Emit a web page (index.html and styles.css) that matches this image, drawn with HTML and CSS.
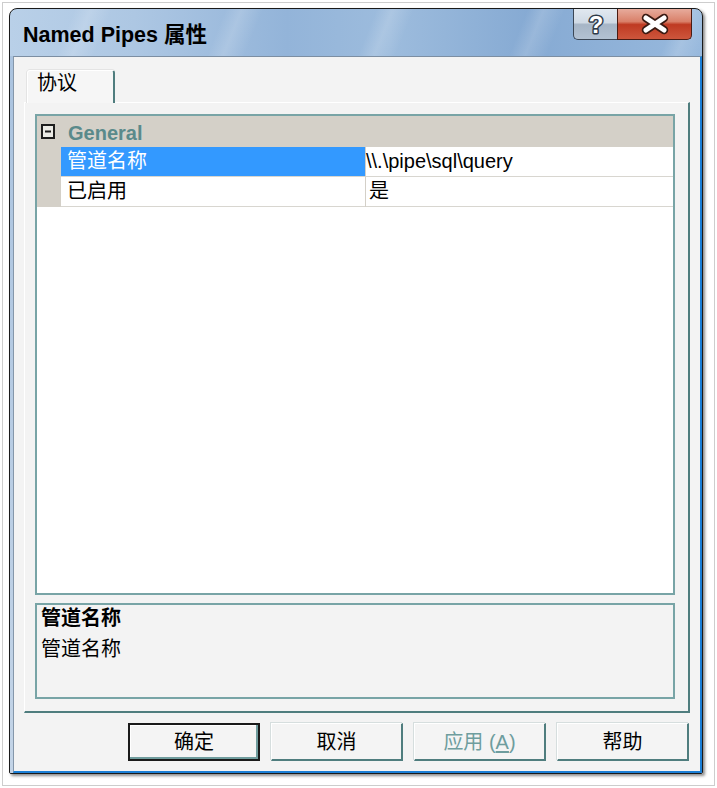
FILE: index.html
```html
<!DOCTYPE html>
<html lang="zh-CN">
<head>
<meta charset="utf-8">
<title>Named Pipes 属性</title>
<link rel="stylesheet" href="styles.css">
</head>
<body>
<div class="shot">
  <div class="window">
    <div class="titlebar">
      <span class="title">Named Pipes 属性</span>
      <div class="caption">
        <div class="cbtn help">
          <svg width="44" height="31" viewBox="0 0 44 31"><text x="22" y="24" text-anchor="middle" class="qmark">?</text></svg>
        </div>
        <div class="cbtn close">
          <svg width="75" height="31" viewBox="0 0 75 31">
            <path d="M28 9 L46 21 M46 9 L28 21" stroke="#3a1a12" stroke-width="8.5" stroke-linecap="round" fill="none"/>
            <path d="M28 9 L46 21 M46 9 L28 21" stroke="#ffffff" stroke-width="5" stroke-linecap="round" fill="none"/>
          </svg>
        </div>
      </div>
    </div>
    <div class="framebody">
      <div class="client">
        <div class="tabs">
          <div class="tab">协议</div>
        </div>
        <div class="panel">
          <div class="grid">
            <div class="cat">
              <svg class="toggle" width="14" height="15" viewBox="0 0 14 15">
                <rect x="1" y="1" width="12" height="13" fill="#ecebe6" stroke="#1e1e1e" stroke-width="2"/>
                <path d="M4 7.5 H10" stroke="#1e1e1e" stroke-width="2"/>
              </svg>
              <span class="catname">General</span>
            </div>
            <div class="row">
              <div class="gut"></div>
              <div class="name sel">管道名称</div>
              <div class="sep"></div>
              <div class="val">\\.\pipe\sql\query</div>
            </div>
            <div class="row">
              <div class="gut"></div>
              <div class="name">已启用</div>
              <div class="sep"></div>
              <div class="val cjk">是</div>
            </div>
          </div>
          <div class="desc">
            <div class="dtitle">管道名称</div>
            <div class="dtext">管道名称</div>
          </div>
        </div>
        <div class="buttons">
          <div class="btn default">确定</div>
          <div class="btn">取消</div>
          <div class="btn disabled">应用 (<u>A</u>)</div>
          <div class="btn">帮助</div>
        </div>
      </div>
    </div>
  </div>
</div>
</body>
</html>
```
FILE: styles.css
```css
* { box-sizing: border-box; }
html, body { margin: 0; padding: 0; background: #ffffff; }
body {
  font-family: "Liberation Sans", "Noto Sans CJK SC", sans-serif;
  font-size: 20px;
  color: #000;
}
.shot {
  margin: 2px;
  width: 713px;
  height: 784px;
  border: 1px solid #cdcdcd;
  background: #ffffff;
  padding: 5px 0 0 6px;
}
.window {
  width: 694px;
  height: 766px;
  border: 1px solid #1a1a1a;
  border-radius: 8px 8px 2px 2px;
  overflow: hidden;
  display: flex;
  flex-direction: column;
  box-shadow: 2px 2px 3px rgba(0, 0, 0, 0.45);
  background:
    repeating-linear-gradient(112deg, rgba(255,255,255,0) 0px, rgba(255,255,255,0) 60px, rgba(255,255,255,0.16) 75px, rgba(255,255,255,0) 95px, rgba(255,255,255,0) 140px),
    linear-gradient(90deg, #b9d0e8 0%, #adc7e3 18%, #93b4d9 40%, #9dbcdd 55%, #86aad3 75%, #98b9dd 100%);
}
.titlebar {
  height: 47px;
  flex: none;
  display: flex;
  align-items: flex-start;
  padding-left: 13px;
}
.title {
  font-size: 21.5px;
  font-weight: bold;
  line-height: 26px;
  padding-top: 13px;
  white-space: nowrap;
}
.caption {
  margin-left: auto;
  margin-right: 10px;
  display: flex;
  height: 31px;
}
.cbtn { height: 31px; border: 1px solid #3b4756; border-top: none; }
.cbtn svg { display: block; }
.help {
  width: 44px;
  border-right: none;
  border-radius: 0 0 0 5px;
  background: linear-gradient(#e1e8f0 0%, #d0dae5 45%, #a6b5c6 52%, #b3c2d3 100%);
}
.close {
  width: 75px;
  border-color: #4a1b12;
  border-radius: 0 0 5px 0;
  background: linear-gradient(#e7ab9c 0%, #d98069 42%, #bf3a22 52%, #cd563c 100%);
}
.qmark {
  font-family: "Liberation Sans", sans-serif;
  font-weight: bold;
  font-size: 24px;
  fill: #ffffff;
  stroke: #2f3a48;
  stroke-width: 3px;
  paint-order: stroke fill;
  stroke-linejoin: round;
}
.framebody {
  flex: 1;
  display: flex;
  padding-left: 3px;
  background: linear-gradient(#aac3df, #c3d4e7);
}
.client {
  flex: 1;
  display: flex;
  flex-direction: column;
  background: #f3f3f3;
  border-top: 1px solid #7c8ea2;
  border-left: 1px solid #8597aa;
  border-right: 2px solid #1b7fd6;
  border-bottom: 2px solid #1b7fd6;
  padding: 13px 10px 0 10px;
}
.tabs {
  display: flex;
  padding-left: 3px;
  height: 32px;
  flex: none;
}
.tab {
  position: relative;
  z-index: 1;
  width: 88px;
  height: 33px;
  background: #f6f6f6;
  border-top: 1px solid #ffffff;
  border-left: 1px solid #ffffff;
  border-right: 2px solid #4f7d7e;
  border-radius: 3px 3px 0 0;
  padding-left: 9px;
  line-height: 24px;
  box-shadow: -1px 0 0 #e4e4e4, 0 -1px 0 #e4e4e4;
}
.panel {
  height: 611px;
  flex: none;
  display: flex;
  flex-direction: column;
  gap: 8px;
  border-top: 1px solid #ffffff;
  border-left: 1px solid #ffffff;
  border-right: 2px solid #4f7d7e;
  border-bottom: 2px solid #4f7d7e;
  padding: 11px 13px 12px 10px;
}
.grid {
  height: 481px;
  flex: none;
  border: 2px solid #78a4a6;
  background: #ffffff;
}
.cat {
  height: 31px;
  background: #d4d0c8;
  display: flex;
  align-items: center;
}
.toggle { margin-left: 4px; display: block; }
.catname {
  margin-left: 13px;
  font-weight: bold;
  color: #5a8a8b;
  line-height: 24px;
  padding-top: 2px;
}
.row { display: flex; height: 30px; }
.gut { width: 24px; background: #d4d0c8; }
.name {
  width: 304px;
  padding-left: 6px;
  line-height: 29px;
  border-bottom: 1px solid #d8d6d0;
}
.name.sel { background: #3399ff; color: #ffffff; }
.sep { width: 1px; background: #d4d0c8; }
.val {
  flex: 1;
  padding-left: 0;
  line-height: 29px;
  border-bottom: 1px solid #d8d6d0;
  white-space: nowrap;
}
.val.cjk { padding-left: 3px; }
.desc {
  height: 96px;
  flex: none;
  border: 2px solid #78a4a6;
  background: #f3f3f3;
  padding: 0 4px;
}
.dtitle { font-weight: bold; line-height: 27px; }
.dtext { line-height: 27px; margin-top: 4px; }
.buttons {
  margin-top: 10px;
  display: flex;
  justify-content: flex-end;
  gap: 11px;
  padding-right: 1px;
}
.btn {
  width: 132px;
  height: 38px;
  background: #f4f4f4;
  border-top: 1px solid #ffffff;
  border-left: 1px solid #ffffff;
  border-right: 2px solid #4f7d7e;
  border-bottom: 2px solid #4f7d7e;
  box-shadow: -1px -1px 0 #d6dede;
  display: flex;
  align-items: center;
  justify-content: center;
  line-height: 24px;
}
.btn.default {
  border: 2px solid #1a1a1a;
  box-shadow: inset -2px -2px 0 #6f9c9d, inset 1px 1px 0 #ffffff;
}
.btn.disabled { color: #6e9d9e; }
.btn.disabled u { text-decoration: underline; text-underline-offset: 2px; }
```
